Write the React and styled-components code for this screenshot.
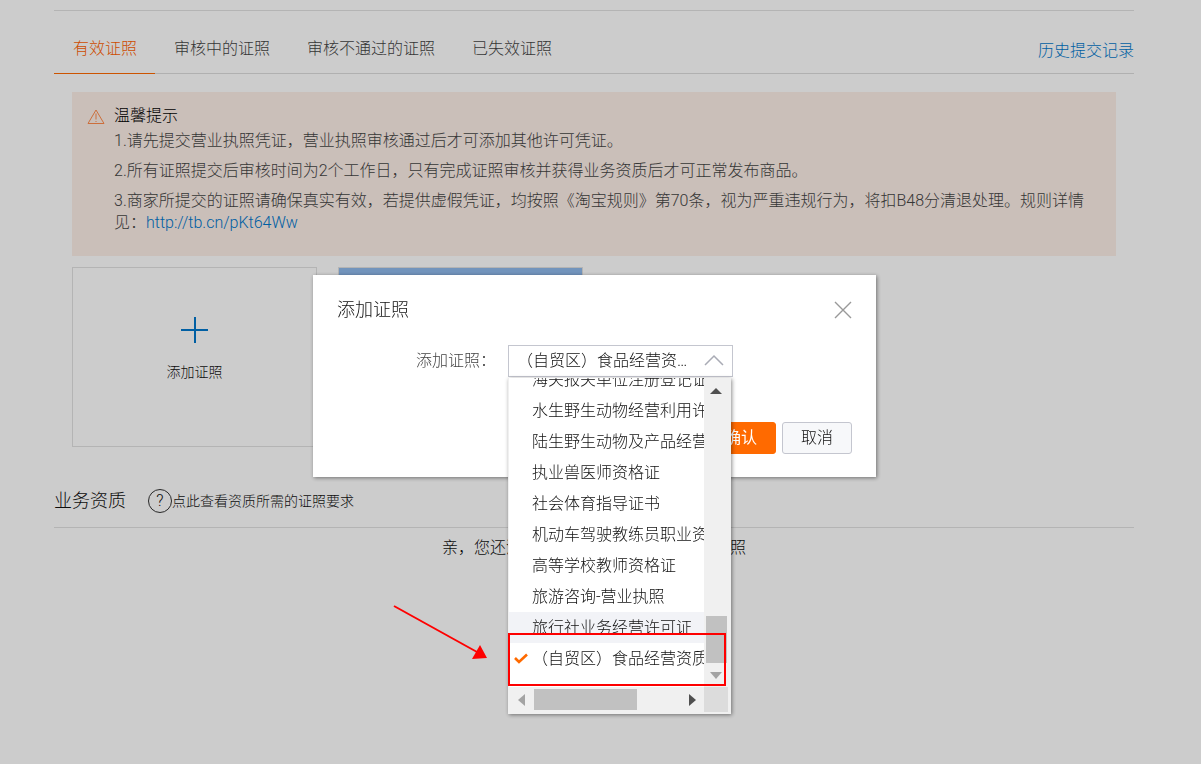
import { useState } from "react";
import styled, { createGlobalStyle } from "styled-components";

const GlobalStyle = createGlobalStyle`
  * {
    box-sizing: border-box;
  }

  body {
    margin: 0;
    background: #fff;
    color: #111;
    font-family: Roboto, "Noto Sans CJK SC", sans-serif;
    font-size: 16px;
    font-weight: 300;
    line-height: 22px;
  }

  button, select {
    font: inherit;
  }

  a {
    color: #0077cc;
    text-decoration: none;
  }
`;

const Page = styled.main`
  padding: 10px 67px 40px 54px;
`;

const TabBar = styled.nav`
  display: flex;
  align-items: flex-end;
  justify-content: space-between;
  height: 64px;
  border-top: 1px solid #e2e2e2;
  border-bottom: 1px solid #dcdcdc;
`;

const Tabs = styled.div`
  display: flex;
`;

const Tab = styled.button`
  height: 52px;
  margin-bottom: -1px;
  padding: 2px 18px 0 19px;
  border: 0;
  border-bottom: 1px solid ${(p) => (p.$active ? "#ff6a00" : "transparent")};
  background: none;
  color: ${(p) => (p.$active ? "#ff6000" : "#444")};
  cursor: pointer;
`;

const HistoryLink = styled.a`
  padding-bottom: 11px;
`;

const Content = styled.div`
  padding: 18px 18px 0;
`;

const Notice = styled.section`
  display: flex;
  gap: 9px;
  padding: 13px 24px 22px 15px;
  background: #fdefe8;
  color: #444;

  svg {
    flex: none;
    margin-top: 4px;
  }

  h2 {
    margin: 0 0 3px;
    color: #000;
    font-size: 16px;
    font-weight: 300;
  }

  p {
    margin: 0 0 8px;
  }

  p:last-child {
    margin: 0;
  }
`;

const Cards = styled.div`
  display: flex;
  gap: 21px;
  margin-top: 11px;
`;

const AddCard = styled.button`
  display: flex;
  flex-direction: column;
  align-items: center;
  width: 245px;
  height: 180px;
  padding: 49px 0 0;
  gap: 17px;
  border: 1px solid #e2e2e2;
  background: none;
  color: #111;
  font-size: 14px;
  cursor: pointer;
`;

const LicenseCard = styled.div`
  width: 245px;
  height: 180px;
  border: 1px solid #e2e2e2;
`;

const LicenseBanner = styled.div`
  height: 40px;
  background: #8fb9ec;
`;

const SectionHead = styled.div`
  display: flex;
  align-items: center;
  gap: 22px;
  margin-top: 42px;
  padding-bottom: 14px;
  border-bottom: 1px solid #e2e2e2;

  h2 {
    margin: 0;
    font-size: 18px;
    font-weight: 300;
  }
`;

const HelpLink = styled.a`
  display: flex;
  align-items: center;
  color: #111;
  font-size: 14px;
`;

const HelpIcon = styled.span`
  width: 24px;
  height: 24px;
  border: 1px solid #333;
  border-radius: 50%;
  font-size: 16px;
  text-align: center;
`;

const Empty = styled.p`
  margin: 9px 0 0;
  text-align: center;
`;

const Mask = styled.div`
  position: fixed;
  inset: 0;
  display: flex;
  align-items: flex-start;
  justify-content: center;
  padding: 275px 12px 0 0;
  background: rgba(0, 0, 0, 0.2);
`;

const Dialog = styled.div`
  width: 563px;
  padding: 23px 24px;
  background: #fff;
  box-shadow: 1px 1px 4px rgba(0, 0, 0, 0.45);
`;

const DialogHead = styled.header`
  display: flex;
  align-items: center;
  justify-content: space-between;
  height: 24px;

  h1 {
    margin: 0;
    font-size: 18px;
    font-weight: 300;
  }
`;

const CloseButton = styled.button`
  display: flex;
  padding: 0;
  border: 0;
  background: none;
  color: #999;
  cursor: pointer;
`;

const Field = styled.div`
  display: flex;
  align-items: center;
  gap: 12px;
  margin-top: 23px;
  padding-left: 79px;

  label {
    color: #444;
  }
`;

const SelectWrap = styled.div`
  position: relative;
  width: 225px;
`;

const Select = styled.select`
  display: block;
  width: 100%;
  height: 32px;
  padding: 0 42px 0 8px;
  border: 1px solid #c4c6cf;
  border-radius: 0;
  background: none;
  color: #111;
  appearance: none;
  text-overflow: ellipsis;
  overflow: hidden;
  white-space: nowrap;
`;

const Chevron = styled.svg`
  position: absolute;
  top: 9px;
  right: 9px;
  pointer-events: none;
`;

const Menu = styled.div`
  position: absolute;
  top: 33px;
  left: 0;
  z-index: 2;
  display: grid;
  grid-template-columns: 195px 24px;
  grid-template-rows: 309px 25px;
  width: 223px;
  padding: 0 3px 2px 1px;
  background: #f0f0f0;
  box-shadow: 1px 1px 4px rgba(0, 0, 0, 0.45);
`;

/* scrolled to the end, so the last option rests on the bottom edge */
const Options = styled.ul`
  display: flex;
  flex-direction: column;
  justify-content: flex-end;
  margin: 0;
  padding: 0 0 13px;
  overflow: hidden;
  background: #fff;
  list-style: none;
`;

const Option = styled.li`
  display: flex;
  flex: none;
  align-items: center;
  height: 31px;
  padding-left: ${(p) => (p.$checked ? "5px" : "23px")};
  gap: 4px;
  background: ${(p) => (p.$hover ? "#f2f3f7" : "#fff")};
  white-space: nowrap;
  cursor: pointer;

  svg {
    flex: none;
  }
`;

const ScrollBar = styled.div`
  display: flex;
  flex-direction: ${(p) => (p.$vertical ? "column" : "row")};
  align-items: center;
  justify-content: space-between;
  padding: ${(p) => (p.$vertical ? "10px 0 8px" : "0 8px 0 9px")};
  background: #f0f0f0;
`;

const Thumb = styled.div`
  width: ${(p) => (p.$vertical ? "21px" : "103px")};
  height: ${(p) => (p.$vertical ? "47px" : "21px")};
  margin: ${(p) => (p.$vertical ? "auto 0 9px" : "0 auto 0 9px")};
  background: #c1c1c1;
`;

const Corner = styled.div`
  background: #dcdcdc;
`;

const Highlight = styled.div`
  position: absolute;
  top: 255px;
  left: 0;
  width: 218px;
  height: 53px;
  border: 2px solid #fe0000;
  pointer-events: none;
`;

const Pointer = styled.svg`
  position: absolute;
  top: 226px;
  left: -116px;
  pointer-events: none;
`;

const DialogFoot = styled.footer`
  display: flex;
  justify-content: flex-end;
  gap: 6px;
  margin-top: 45px;
`;

const Button = styled.button`
  width: 70px;
  height: 32px;
  padding: 0;
  border: 1px solid ${(p) => (p.$primary ? "#ff6a00" : "#c4c6cf")};
  border-radius: 3px;
  background: ${(p) => (p.$primary ? "#ff6a00" : "#f7f8fa")};
  color: ${(p) => (p.$primary ? "#fff" : "#111")};
  font-weight: ${(p) => (p.$primary ? 400 : 300)};
  cursor: pointer;
`;

const tabs = ["有效证照", "审核中的证照", "审核不通过的证照", "已失效证照"];

const licenses = [
  "海关报关单位注册登记证书",
  "水生野生动物经营利用许可证",
  "陆生野生动物及产品经营许可证",
  "执业兽医师资格证",
  "社会体育指导证书",
  "机动车驾驶教练员职业资格证",
  "高等学校教师资格证",
  "旅游咨询-营业执照",
  "旅行社业务经营许可证",
  "（自贸区）食品经营资质",
];

const Arrow = ({ points, dark, w, h }) => (
  <svg width={w} height={h} aria-hidden="true">
    <polygon points={points} fill={dark ? "#505050" : "#a3a3a3"} />
  </svg>
);

const App = () => {
  const [tab, setTab] = useState(0);
  const [license, setLicense] = useState(licenses[9]);
  const [hovered, setHovered] = useState(8);

  return (
    <>
      <GlobalStyle />
      <Page>
        <TabBar>
          <Tabs>
            {tabs.map((name, i) => (
              <Tab key={name} $active={i === tab} onClick={() => setTab(i)}>
                {name}
              </Tab>
            ))}
          </Tabs>
          <HistoryLink href="#history">历史提交记录</HistoryLink>
        </TabBar>

        <Content>
          <Notice>
            <svg width="18" height="16" viewBox="0 0 18 16" fill="none" stroke="#ff8a4a" strokeLinejoin="round">
              <path d="M9 1 L17 14.5 H1 Z M9 4.5 V10.5 M9 12 V13" />
            </svg>
            <div>
              <h2>温馨提示</h2>
              <p>1.请先提交营业执照凭证，营业执照审核通过后才可添加其他许可凭证。</p>
              <p>2.所有证照提交后审核时间为2个工作日，只有完成证照审核并获得业务资质后才可正常发布商品。</p>
              <p>
                3.商家所提交的证照请确保真实有效，若提供虚假凭证，均按照《淘宝规则》第70条，视为严重违规行为，将扣B48分清退处理。规则详情见：
                <a href="http://tb.cn/pKt64Ww">http://tb.cn/pKt64Ww</a>
              </p>
            </div>
          </Notice>

          <Cards>
            <AddCard>
              <svg width="27" height="27" viewBox="0 0 27 27" stroke="#0077cc" strokeWidth="2">
                <path d="M0 13 H27 M14 0 V26" />
              </svg>
              添加证照
            </AddCard>
            <LicenseCard>
              <LicenseBanner />
            </LicenseCard>
          </Cards>
        </Content>

        <SectionHead>
          <h2>业务资质</h2>
          <HelpLink href="#help">
            <HelpIcon>?</HelpIcon>
            点此查看资质所需的证照要求
          </HelpLink>
        </SectionHead>
        <Empty>亲，您还没有任何业务资质，请先添加证照</Empty>
      </Page>

      <Mask>
        <Dialog role="dialog" aria-labelledby="dialog-title">
          <DialogHead>
            <h1 id="dialog-title">添加证照</h1>
            <CloseButton aria-label="关闭">
              <svg width="18" height="18" viewBox="0 0 18 18" stroke="currentColor" strokeWidth="1.4">
                <path d="M1 1 L17 17 M17 1 L1 17" />
              </svg>
            </CloseButton>
          </DialogHead>

          <Field>
            <label htmlFor="license">添加证照：</label>
            <SelectWrap>
              <Select id="license" value={license} onChange={(e) => setLicense(e.target.value)}>
                {licenses.map((name) => (
                  <option key={name}>{name}</option>
                ))}
              </Select>
              <Chevron width="20" height="13" viewBox="0 0 20 13" fill="none" stroke="#a9abb5" strokeWidth="1.5">
                <path d="M1 11 L10 2 L19 11" />
              </Chevron>
              <Menu>
                <Options role="listbox">
                  {licenses.map((name, i) => (
                    <Option
                      key={name}
                      role="option"
                      aria-selected={name === license}
                      $checked={name === license}
                      $hover={i === hovered}
                      onMouseEnter={() => setHovered(i)}
                      onClick={() => setLicense(name)}
                    >
                      {name === license && (
                        <svg width="14" height="12" viewBox="0 0 14 12" fill="none" stroke="#ff6a00" strokeWidth="2.6">
                          <path d="M1 5 L5 9 L13 1.5" />
                        </svg>
                      )}
                      {name}
                    </Option>
                  ))}
                </Options>
                <ScrollBar $vertical>
                  <Arrow w={12} h={6} points="0,6 6,0 12,6" dark />
                  <Thumb $vertical />
                  <Arrow w={12} h={7} points="0,0 12,0 6,7" />
                </ScrollBar>
                <ScrollBar>
                  <Arrow w={7} h={12} points="7,0 0,6 7,12" />
                  <Thumb />
                  <Arrow w={7} h={12} points="0,0 7,6 0,12" dark />
                </ScrollBar>
                <Corner />
                <Highlight />
                <Pointer width="96" height="58" viewBox="0 0 96 58">
                  <path d="M2 2 L85 48" stroke="#fe0000" strokeWidth="2" />
                  <polygon points="95,54 88,41 80,55" fill="#fe0000" />
                </Pointer>
              </Menu>
            </SelectWrap>
          </Field>

          <DialogFoot>
            <Button $primary>确认</Button>
            <Button>取消</Button>
          </DialogFoot>
        </Dialog>
      </Mask>
    </>
  );
};

export default App;
